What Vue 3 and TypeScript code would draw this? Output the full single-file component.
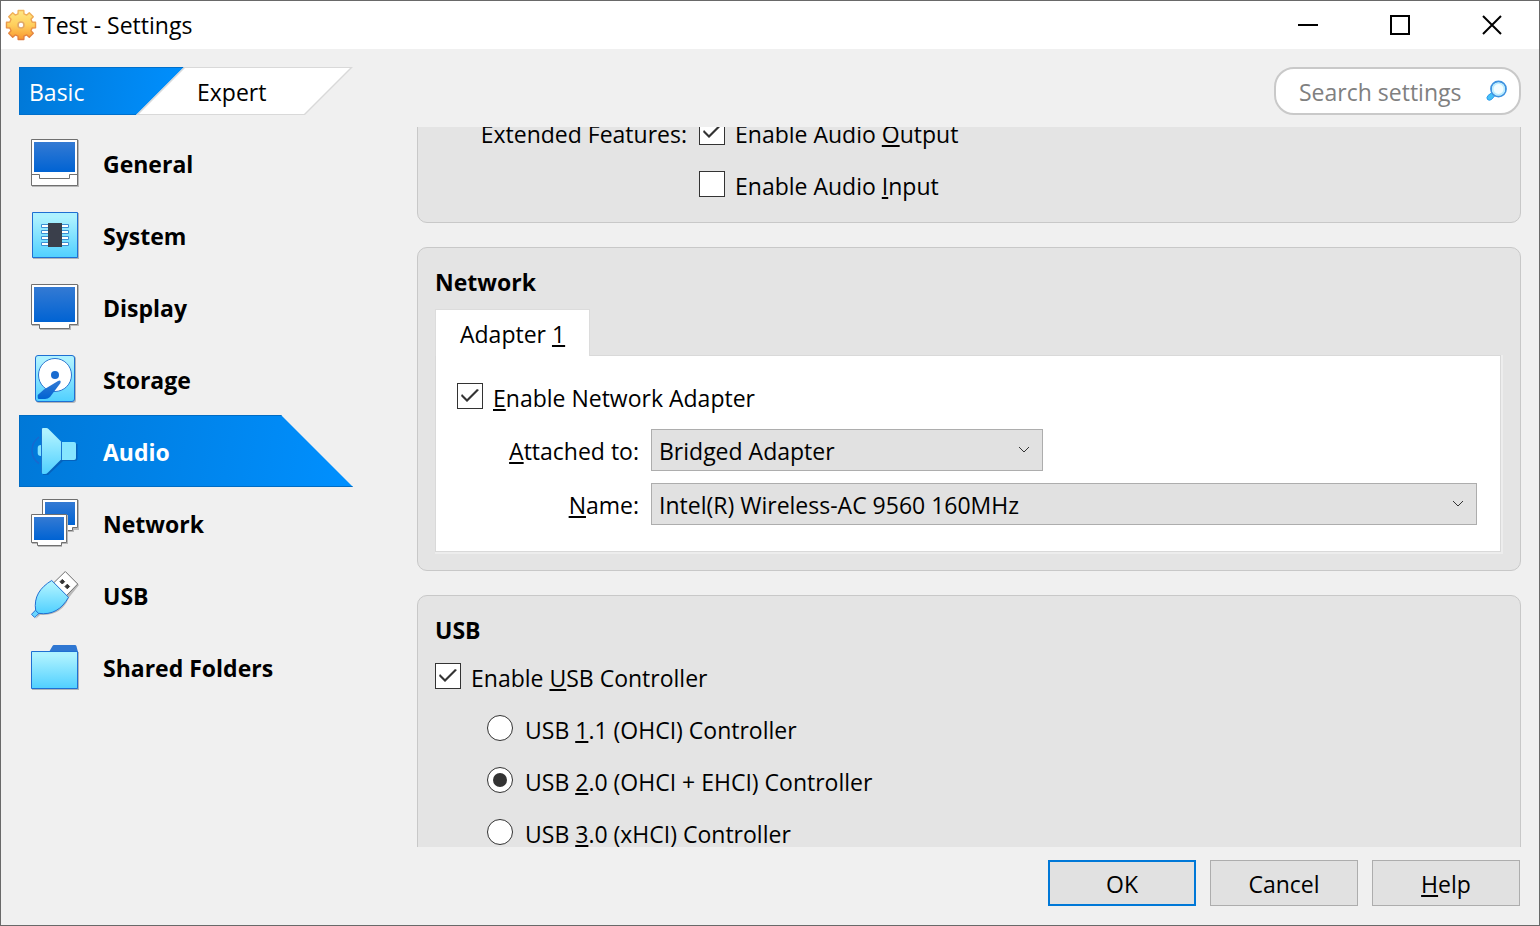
<script setup lang="ts">
import { onMounted, ref } from 'vue'

type Category = 'general' | 'system' | 'display' | 'storage' | 'audio' | 'network' | 'usb' | 'folders'

const categories: { id: Category; label: string }[] = [
  { id: 'general', label: 'General' },
  { id: 'system', label: 'System' },
  { id: 'display', label: 'Display' },
  { id: 'storage', label: 'Storage' },
  { id: 'audio', label: 'Audio' },
  { id: 'network', label: 'Network' },
  { id: 'usb', label: 'USB' },
  { id: 'folders', label: 'Shared Folders' },
]

const usbModes = [
  { id: 'ohci', key: '1', rest: '.1 (OHCI) Controller' },
  { id: 'ehci', key: '2', rest: '.0 (OHCI + EHCI) Controller' },
  { id: 'xhci', key: '3', rest: '.0 (xHCI) Controller' },
]

const mode = ref<'basic' | 'expert'>('basic')
const current = ref<Category>('audio')
const search = ref('')
const audioOutput = ref(true)
const audioInput = ref(false)
const networkEnabled = ref(true)
const attachedTo = ref('Bridged Adapter')
const adapterName = ref('Intel(R) Wireless-AC 9560 160MHz')
const usbEnabled = ref(true)
const usbMode = ref('ehci')
const scroller = ref<HTMLElement | null>(null)

// Outline of an eight-toothed gear centred on 16,16
const gearPath = (() => {
  const points: string[] = []
  const add = (radius: number, degrees: number) => {
    const a = (degrees * Math.PI) / 180
    points.push(`${(16 + radius * Math.cos(a)).toFixed(2)} ${(16 + radius * Math.sin(a)).toFixed(2)}`)
  }
  for (let i = 0; i < 8; i++) {
    const c = i * 45
    add(11.5, c - 15)
    add(14.8, c - 11)
    add(14.8, c + 11)
    add(11.5, c + 15)
  }
  return `M${points.join('L')}Z`
})()

onMounted(() => {
  if (scroller.value) scroller.value.scrollTop = 28
})
</script>

<template>
  <div class="window">
    <svg class="defs" aria-hidden="true">
      <defs>
        <linearGradient id="blue" x1="0" y1="0" x2="0" y2="1">
          <stop offset="0" stop-color="#347ad3" />
          <stop offset="1" stop-color="#0063d3" />
        </linearGradient>
        <linearGradient id="cyan" x1="0" y1="0" x2="0" y2="1">
          <stop offset="0.1" stop-color="#aef2ff" />
          <stop offset="1" stop-color="#50d0ff" />
        </linearGradient>
        <linearGradient id="gold" x1="0" y1="0" x2="0" y2="1">
          <stop offset="0" stop-color="#ffe884" />
          <stop offset="0.5" stop-color="#ffcf5c" />
          <stop offset="1" stop-color="#f8962f" />
        </linearGradient>
        <linearGradient id="gold-edge" x1="0" y1="0" x2="0" y2="1">
          <stop offset="0" stop-color="#f2b65a" />
          <stop offset="1" stop-color="#e27a3a" />
        </linearGradient>
      </defs>
    </svg>

    <header class="titlebar">
      <svg class="gear" viewBox="0 0 32 32" aria-hidden="true">
        <path :d="gearPath" fill="url(#gold)" stroke="url(#gold-edge)" stroke-width="1.400" stroke-linejoin="round" />
        <circle cx="16" cy="16" r="3" fill="#fff" stroke="#e0a868" stroke-width="1.600" />
      </svg>
      <h1>Test - Settings</h1>
      <div class="controls">
        <button type="button" aria-label="Minimize">
          <svg viewBox="0 0 20 20"><path d="M0 10H20" /></svg>
        </button>
        <button type="button" aria-label="Maximize">
          <svg viewBox="0 0 20 20"><path d="M1 1H19V19H1Z" /></svg>
        </button>
        <button type="button" aria-label="Close">
          <svg viewBox="0 0 20 20"><path d="M1 1L19 19M19 1L1 19" /></svg>
        </button>
      </div>
    </header>

    <div class="toolbar">
      <div class="modes">
        <button type="button" class="mode basic" :aria-pressed="mode === 'basic'" @click="mode = 'basic'">Basic</button>
        <button type="button" class="mode expert" :aria-pressed="mode === 'expert'" @click="mode = 'expert'">Expert</button>
      </div>
      <label class="search">
        <input v-model="search" type="text" placeholder="Search settings" aria-label="Search settings" />
        <svg viewBox="0 0 22 22" aria-hidden="true">
          <path d="M2 15.500L6 12.500L9 15.500L5.500 19.500Q3 21 1.500 19.500Q0.200 17.500 2 15.500Z" fill="#45c0f8" stroke="#2b9aea" stroke-width="1" />
          <circle cx="12.500" cy="9" r="7.500" fill="#fff" stroke="#3d92e0" stroke-width="1.800" />
          <circle cx="12.500" cy="9" r="5.800" fill="#f2fcff" stroke="#b9edff" stroke-width="1.600" />
        </svg>
      </label>
    </div>

    <main class="content">
      <nav class="sidebar" aria-label="Settings categories">
        <button
          v-for="c in categories"
          :key="c.id"
          type="button"
          class="category"
          :class="{ selected: c.id === current }"
          @click="current = c.id"
        >
          <svg class="icon" viewBox="0 0 48 48" aria-hidden="true">
            <g v-if="c.id === 'general'">
              <path d="M1 1H48V48H1Z" fill="#b8b8b8" />
              <path d="M0.500 0.500H46.500V46.500H0.500Z" fill="#fff" stroke="#707070" />
              <path d="M3 3H44V33H3Z" fill="url(#blue)" />
              <path d="M0.500 35.500H8.500V39.500H38.500V35.500H46.500" fill="none" stroke="#707070" />
            </g>
            <g v-else-if="c.id === 'system'">
              <path d="M2 2H48V48H2Z" fill="#b0b4b8" />
              <path d="M1.500 1.500H46.500V46.500H1.500Z" fill="url(#cyan)" stroke="#1f6fd2" />
              <path
                v-for="y in [13.5, 19.5, 25.5, 31.5]"
                :key="y"
                :d="`M10.500 ${y}H37.500V${y + 3}H10.500Z`"
                fill="#fff"
                stroke="#3b8fd4"
              />
              <path d="M17 12H31V36H17Z" fill="#3a3f4b" />
            </g>
            <g v-else-if="c.id === 'display'">
              <path d="M1 2H48V43H40V47H9V43H1Z" fill="#b8b8b8" />
              <path d="M0.500 1.500H46.500V41.500H38.500V45.500H8.500V41.500H0.500Z" fill="#fff" stroke="#707070" />
              <path d="M3 4H44V39H3Z" fill="url(#blue)" />
            </g>
            <g v-else-if="c.id === 'storage'">
              <rect x="5" y="1" width="40" height="47" rx="3" fill="#b0b4b8" />
              <rect x="4.500" y="0.500" width="39" height="46" rx="2.500" fill="url(#cyan)" stroke="#1f6fd2" />
              <circle cx="24" cy="20" r="16.500" fill="#fff" stroke="#2b76d0" />
              <circle cx="24" cy="20" r="4" fill="#1a6cd0" />
              <path d="M6.700 40L13 34.500L27 26Q30.500 24.500 29.500 28L19 42Q17 44 14 44H8Q6.700 44 6.700 42.500Z" fill="url(#blue)" />
            </g>
            <g v-else-if="c.id === 'audio'">
              <path d="M8 10Q1 15 1 23.500Q1 32 8 36.500" fill="none" stroke="#1769cf" stroke-width="1.500" />
              <path d="M10 18Q6.700 18 6.700 21V26Q6.700 29 10 29Z" fill="#7fe2ff" />
              <path d="M12 48H17L32 34H44Q46.500 34 46.500 32V17L31 16L17 3Z" fill="#0562bd" />
              <path d="M12 1H15.500Q16.500 1 17.500 2L30 14.500V32.500L17 45.500Q15.500 47 14 47H12Q11 47 11 46V2Q11 1 12 1Z" fill="url(#cyan)" />
              <path d="M31 15H43Q45 15 45 17V31Q45 33 43 33H31Z" fill="#86e5ff" />
              <path d="M30.500 14V33M10.500 1V46" stroke="#1974d0" />
            </g>
            <g v-else-if="c.id === 'network'">
              <path d="M12 1H48V31H43V33H17V31H12Z" fill="#b8b8b8" />
              <path d="M11.500 0.500H46.500V28.500H41.500V31.500H16.500V28.500H11.500Z" fill="#fff" stroke="#707070" />
              <path d="M14 3H44V26H14Z" fill="url(#blue)" />
              <path d="M1 16H37V45H31V48H7V45H1Z" fill="#b8b8b8" />
              <path d="M0.500 15.500H35.500V43.500H30.500V46.500H6.500V43.500H0.500Z" fill="#fff" stroke="#707070" />
              <path d="M3 18H33V41H3Z" fill="url(#blue)" />
            </g>
            <g v-else-if="c.id === 'usb'">
              <path d="M24 12.500L35 1.500L48 14L38 26.500Q31 45 9 44L4.500 48Z" fill="#b8b8b8" />
              <path d="M22.500 12L34.300 0.500L46.700 13L35 25Z" fill="#fff" stroke="#707070" />
              <path d="M29 10.700L31.300 8.400L33.600 10.700L31.300 13ZM34 15.500L36.300 13.200L38.600 15.500L36.300 17.800Z" fill="#333" stroke="#333" />
              <path d="M4.700 39L0.500 43.300L3.700 46.500L8 42.300Z" fill="#6ad6ff" stroke="#1f6fd2" />
              <path d="M20.700 9.500L37.500 26.300C31 38 21 44.500 7.500 42.300L4.700 39.500C2.500 26 9 16.500 20.700 9.500Z" fill="url(#cyan)" stroke="#1f6fd2" />
            </g>
            <g v-else>
              <path d="M1 9H48V47H1Z" fill="#b0b4b8" />
              <path d="M18 9L21.500 3Q22 2 23 2H44Q45 2 45.400 3L47 9Z" fill="#2f77d2" />
              <path d="M0.500 8.500H46.500V45.500H0.500Z" fill="url(#cyan)" stroke="#1f6fd2" />
            </g>
          </svg>
          <span>{{ c.label }}</span>
        </button>
      </nav>

      <div ref="scroller" class="pages">
        <section class="panel audio-panel" aria-label="Audio">
          <div class="features">
            <span class="caption">Extended Features:</span>
            <div class="stack">
              <label class="option"><input v-model="audioOutput" type="checkbox" /><span>Enable Audio <u>O</u>utput</span></label>
              <label class="option"><input v-model="audioInput" type="checkbox" /><span>Enable Audio <u>I</u>nput</span></label>
            </div>
          </div>
        </section>

        <section class="panel">
          <h2>Network</h2>
          <div class="tabs" role="tablist">
            <button type="button" role="tab" aria-selected="true" class="tab">Adapter <u>1</u></button>
          </div>
          <div class="tab-body" role="tabpanel">
            <label class="option"><input v-model="networkEnabled" type="checkbox" /><span><u>E</u>nable Network Adapter</span></label>
            <div class="fields">
              <label class="caption" for="attached"><u>A</u>ttached to:</label>
              <div class="combo short">
                <select id="attached" v-model="attachedTo">
                  <option>Bridged Adapter</option>
                </select>
                <svg viewBox="0 0 12 8" aria-hidden="true"><path d="M1 1L6 6L11 1" /></svg>
              </div>
              <label class="caption" for="adapter-name"><u>N</u>ame:</label>
              <div class="combo">
                <select id="adapter-name" v-model="adapterName">
                  <option>Intel(R) Wireless-AC 9560 160MHz</option>
                </select>
                <svg viewBox="0 0 12 8" aria-hidden="true"><path d="M1 1L6 6L11 1" /></svg>
              </div>
            </div>
          </div>
        </section>

        <section class="panel">
          <h2>USB</h2>
          <div class="stack usb">
            <label class="option"><input v-model="usbEnabled" type="checkbox" /><span>Enable <u>U</u>SB Controller</span></label>
            <label v-for="m in usbModes" :key="m.id" class="option choice">
              <input v-model="usbMode" type="radio" name="usb-mode" :value="m.id" />
              <span>USB <u>{{ m.key }}</u>{{ m.rest }}</span>
            </label>
          </div>
        </section>
      </div>
    </main>

    <footer class="footer">
      <button type="button" class="action primary">OK</button>
      <button type="button" class="action">Cancel</button>
      <button type="button" class="action"><span><u>H</u>elp</span></button>
    </footer>
  </div>
</template>

<style>
body {
  margin: 0;
}
</style>

<style scoped>
* {
  box-sizing: border-box;
}

.window {
  display: flex;
  flex-direction: column;
  height: 100vh;
  border: 1px solid #696969;
  background: #f0f0f0;
  color: #000;
  font-family: 'Open Sans', 'Noto Sans', sans-serif;
  font-size: 23px;
  line-height: 32px;
}

button,
input,
select {
  font: inherit;
  color: inherit;
  margin: 0;
}

button {
  padding: 0;
  border: 0;
  background: none;
}

h1,
h2 {
  margin: 0;
  font-size: inherit;
}

u {
  text-decoration-thickness: 2px;
  text-underline-offset: 2px;
  text-decoration-skip-ink: none;
}

.defs {
  position: absolute;
  width: 0;
  height: 0;
}

.titlebar {
  display: flex;
  align-items: center;
  height: 48px;
  padding: 0 1px 0 4px;
  background: #fff;
}

.titlebar h1 {
  flex: 1;
  margin-left: 6px;
  font-weight: 400;
}

.gear {
  width: 32px;
  height: 32px;
}

.controls {
  display: flex;
}

.controls button {
  display: flex;
  align-items: center;
  justify-content: center;
  width: 92px;
  height: 46px;
}

.controls svg {
  width: 20px;
  height: 20px;
  fill: none;
  stroke: #000;
  stroke-width: 2px;
}

.toolbar {
  display: flex;
  justify-content: space-between;
  padding: 18px 18px 12px;
}

.modes {
  display: flex;
}

.mode {
  position: relative;
  z-index: 0;
  height: 48px;
  padding-top: 2px;
  text-align: left;
}

.basic {
  width: 165px;
  padding-left: 9px;
  color: #fff;
  background: linear-gradient(100deg, #0078d7, #0090ff);
  border: 1px solid #0070cc;
  border-right: 0;
  clip-path: polygon(0 0, 100% 0, calc(100% - 48px) 100%, 0 100%);
}

.expert {
  width: 217px;
  margin-left: -48px;
  padding-left: 61px;
  background: #d9d9d9;
  clip-path: polygon(48px 0, 100% 0, calc(100% - 48px) 100%, 0 100%);
}

.expert::before {
  content: '';
  position: absolute;
  z-index: -1;
  inset: 1px 3px;
  background: #fff;
  clip-path: polygon(46px 0, 100% 0, calc(100% - 46px) 100%, 0 100%);
}

.search {
  display: flex;
  align-items: center;
  width: 247px;
  height: 48px;
  padding: 2px 11px 0 23px;
  border: 2px solid #c9c9c9;
  border-radius: 20px;
  background: #fff;
}

.search input {
  flex: 1;
  min-width: 0;
  padding: 0;
  border: 0;
  outline: 0;
  background: none;
}

.search input::placeholder {
  color: #808080;
  opacity: 1;
}

.search svg {
  width: 22px;
  height: 22px;
  margin-bottom: 2px;
}

.content {
  display: flex;
  flex: 1;
  gap: 64px;
  min-height: 0;
  padding: 0 18px;
}

.sidebar {
  display: flex;
  flex-direction: column;
  flex: none;
  width: 334px;
}

.category {
  display: flex;
  align-items: center;
  gap: 24px;
  height: 72px;
  padding: 0 12px;
  font-weight: 700;
  text-align: left;
}

.category span {
  padding-top: 2px;
}

.category.selected {
  color: #fff;
  background: linear-gradient(100deg, #0078d7, #0090ff);
  box-shadow: inset 0 0 0 1px #006cc4;
  clip-path: polygon(0 0, calc(100% - 72px) 0, 100% 100%, 0 100%);
}

.icon {
  flex: none;
  width: 48px;
  height: 48px;
}

.pages {
  display: flex;
  flex: 1;
  flex-direction: column;
  gap: 24px;
  min-width: 0;
  overflow-y: auto;
  scrollbar-width: none;
}

.panel {
  flex: none;
  padding: 18px 19px 18px 17px;
  border: 1px solid #c8c8c8;
  border-radius: 10px;
  background: #e4e4e4;
}

.audio-panel {
  padding-bottom: 20px;
}

.features {
  display: grid;
  grid-template-columns: 252px 1fr;
  column-gap: 12px;
}

.caption {
  text-align: right;
}

.stack {
  display: flex;
  flex-direction: column;
  align-items: flex-start;
  gap: 20px;
}

.option {
  display: flex;
  align-items: flex-start;
  gap: 10px;
}

.option input {
  flex: none;
  display: grid;
  place-items: center;
  width: 26px;
  height: 26px;
  margin-top: 1px;
  border: 1px solid #333;
  background: #fff;
  appearance: none;
}

.option input[type='checkbox']:checked::before {
  content: '';
  width: 20px;
  height: 14px;
  background: #333;
  clip-path: path('M1 7L2 5L7 10L17 0L19 1L7 13Z');
}

.option input[type='radio'] {
  border-radius: 50%;
}

.option input[type='radio']:checked::before {
  content: '';
  width: 14px;
  height: 14px;
  border-radius: 50%;
  background: #333;
}

.choice {
  gap: 12px;
  margin-left: 52px;
}

.usb {
  margin-top: 16px;
}

.tabs {
  display: flex;
  margin-top: 11px;
}

.tab {
  position: relative;
  z-index: 1;
  height: 47px;
  margin-bottom: -1px;
  padding: 2px 24px 0;
  border: 1px solid #dcdcdc;
  border-bottom: 0;
  background: #fff;
}

.tab-body {
  padding: 26px 23px 26px 21px;
  border: 1px solid #d9d9d9;
  background: #fff;
  box-shadow: 1px 1px 0 1px #ededed;
}

.fields {
  display: grid;
  grid-template-columns: 182px 1fr;
  align-items: center;
  gap: 12px;
  margin-top: 15px;
}

.fields .caption {
  padding-top: 2px;
}

.combo {
  position: relative;
}

.short {
  width: 392px;
}

.combo select {
  display: block;
  width: 100%;
  height: 42px;
  padding: 2px 36px 0 7px;
  border: 1px solid #adadad;
  border-radius: 0;
  background: #e1e1e1;
  appearance: none;
}

.combo svg {
  position: absolute;
  right: 13px;
  top: 17px;
  width: 12px;
  height: 8px;
  fill: none;
  stroke: #333;
  pointer-events: none;
}

.footer {
  display: flex;
  justify-content: flex-end;
  gap: 14px;
  padding: 13px 19px 19px;
}

.action {
  width: 148px;
  height: 46px;
  padding-top: 2px;
  border: 1px solid #adadad;
  background: #e1e1e1;
}

.primary {
  border: 2px solid #0078d7;
}
</style>
